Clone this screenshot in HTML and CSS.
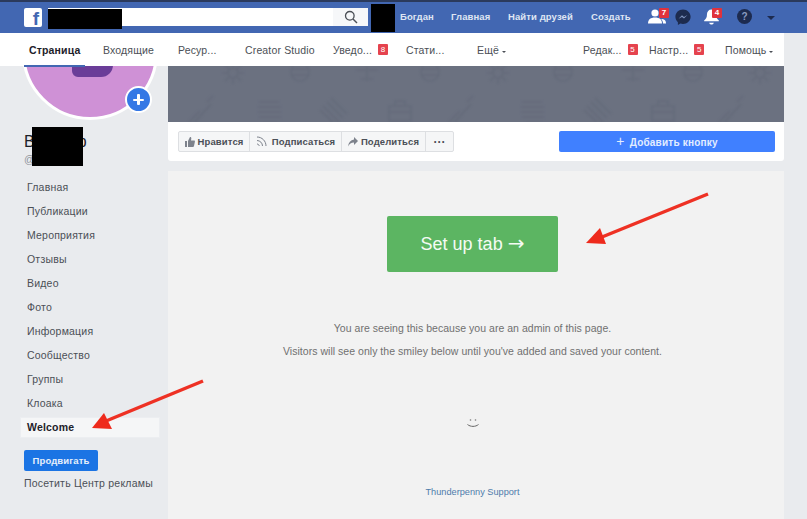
FILE: index.html
```html
<!DOCTYPE html>
<html lang="ru">
<head>
<meta charset="utf-8">
<title>Welcome</title>
<link rel="stylesheet" href="styles.css">
</head>
<body>
<div class="page">
  <header class="topbar">
    <div class="topbar-inner">
      <div class="fb-logo">f</div>
      <div class="search">
        <div class="search-redact"></div>
        <div class="search-btn">
          <svg width="14" height="14" viewBox="0 0 14 14"><circle cx="5.8" cy="5.8" r="4.3" fill="none" stroke="#4b4f56" stroke-width="1.3"/><path d="M9 9l4 4" stroke="#4b4f56" stroke-width="1.5"/></svg>
        </div>
      </div>
      <div class="avatar-redact"></div>
      <nav class="top-links">
        <a>Богдан</a><a>Главная</a><a>Найти друзей</a><a>Создать</a>
      </nav>
      <div class="top-icons">
        <div class="ticon friends">
          <svg width="18" height="15" viewBox="0 0 18 15"><circle cx="7" cy="4" r="3.6" fill="#fff"/><path d="M0 14.500c0-4 2.500-6 7-6s7 2 7 6z" fill="#fff"/><circle cx="13.500" cy="6.500" r="2.600" fill="#fff"/><path d="M13 10c3 0 5 1 5 4.500h-3c0-2-.8-3.500-2-4.500z" fill="#fff"/></svg>
          <span class="badge">7</span>
        </div>
        <div class="ticon msg">
          <svg width="16" height="16" viewBox="0 0 16 16"><path d="M8 .5C3.700 .5 .4 3.700 .4 7.800c0 2.200 1 4.100 2.500 5.400V16l2.500-1.400c.8 .2 1.700 .4 2.600 .4 4.300 0 7.600-3.200 7.600-7.200S12.300 .5 8 .5z" fill="#1d2b4f"/><path d="M3.500 9.800L7 6.300l2 1.700 3.400-1.900L9 9.600 7 7.900z" fill="#7f93bd"/></svg>
        </div>
        <div class="ticon bell">
          <svg width="17" height="17" viewBox="0 0 18 18"><path d="M9 1.500c-3 0-4.800 2.200-4.800 5.200 0 3.500-1 4.800-3 6.500v.8h15.600v-.8c-2-1.700-3-3-3-6.500 0-3-1.800-5.200-4.800-5.200z" fill="#fff"/><path d="M6.500 15.500h5c-.3 1.200-1.300 2-2.500 2s-2.200-.8-2.500-2z" fill="#fff"/></svg>
          <span class="badge">4</span>
        </div>
        <div class="ticon help">?</div>
        <div class="caret-down"></div>
      </div>
    </div>
  </header>

  <nav class="subnav">
    <div class="tab tab-active">Страница</div>
    <div class="tab tab-inbox">Входящие</div>
    <div class="tab tab-res">Ресур...</div>
    <div class="tab tab-cs">Creator Studio</div>
    <div class="tab tab-notif">Уведо...<span class="sq">8</span></div>
    <div class="tab tab-stat">Стати...</div>
    <div class="tab tab-more">Ещё<i class="mini"></i></div>
    <div class="sub-right">
      <div class="tab">Редак...<span class="sq sq-r">5</span></div>
      <div class="tab">Настр...<span class="sq sq-r">5</span></div>
      <div class="tab">Помощь<i class="mini"></i></div>
    </div>
  </nav>

  <div class="body">
    <aside class="side">
      <div class="profile">
        <div class="pic"><div class="pic-letter"></div></div>
        <div class="plus"><span></span></div>
      </div>
      <div class="name-block">
        <div class="pname">В<span class="pname-gap"></span>р</div>
        <div class="handle">@</div>
        <div class="name-redact"></div>
      </div>
      <ul class="menu">
        <li>Главная</li>
        <li>Публикации</li>
        <li>Мероприятия</li>
        <li>Отзывы</li>
        <li>Видео</li>
        <li>Фото</li>
        <li>Информация</li>
        <li>Сообщество</li>
        <li>Группы</li>
        <li>Клоака</li>
        <li class="menu-active">Welcome</li>
      </ul>
      <button class="promote">Продвигать</button>
      <div class="adcenter">Посетить Центр рекламы</div>
    </aside>

    <main class="main">
      <div class="cover">
        <svg class="cover-pattern" width="616" height="56" viewBox="0 0 616 56">
          <defs>
            <g id="m-sun"><circle r="5"/><path d="M-11 0h6M5 0h6M0-11v6M0 5v6M-8-8l4 4M4 4l4 4M8-8l-4 4M-4 4l-4 4"/></g>
            <g id="m-ball"><circle r="9"/><path d="M-9-3h18M-9 3h18"/></g>
            <g id="m-tree"><path d="M-11-3h22M0-8v16M-6 6h12"/></g>
            <g id="m-guitar"><path d="M-14 12l11-11M-10 14L8-6M4-8l6-6"/></g>
            <g id="m-lines"><path d="M-11-8h20M-12-3h23M-12 2h23M-11 7h22M-8 12h16"/></g>
            <g id="m-hatch"><path d="M-10-4L6 12M-6-8L10 8M-2-12L14 4M-13 0L2 14"/></g>
            <g id="m-bag"><path d="M-11-4h22v15h-22zM-5-4v-5h10v5M-11 2h22"/></g>
          </defs>
          <g class="motifs">
            <use href="#m-sun" x="65" y="7"/><use href="#m-ball" x="132" y="6"/><use href="#m-tree" x="199" y="7"/><use href="#m-ball" x="262" y="6"/>
            <use href="#m-sun" x="330" y="7"/><use href="#m-ball" x="395" y="6"/><use href="#m-tree" x="465" y="7"/><use href="#m-ball" x="525" y="6"/><use href="#m-sun" x="592" y="7"/>
            <use href="#m-guitar" x="35" y="44"/><use href="#m-lines" x="102" y="44"/><use href="#m-hatch" x="165" y="44"/><use href="#m-bag" x="232" y="44"/>
            <use href="#m-guitar" x="295" y="44"/><use href="#m-lines" x="365" y="44"/><use href="#m-hatch" x="429" y="44"/><use href="#m-bag" x="495" y="44"/><use href="#m-guitar" x="565" y="44"/>
          </g>
        </svg>
      </div>
      <div class="actions">
        <div class="btn-group">
          <div class="abtn b-like">
            <svg width="10" height="10" viewBox="0 0 10 10"><path d="M0 4h2v6H0zM3 4l2-4c1 0 1.500 .6 1.300 1.500L6 3.500h3c.8 0 1 .6 .9 1.200L9 9c-.1 .6-.5 1-1.100 1H3z" fill="#7d828c"/></svg>
            Нравится
          </div>
          <div class="abtn b-sub">
            <svg width="11" height="11" viewBox="0 0 11 11"><path d="M1 1c5 0 9 4 9 9M1 4.500c3 0 5.500 2.500 5.500 5.500M1 8c1.200 0 2.200 1 2.200 2" fill="none" stroke="#7d828c" stroke-width="1"/></svg>
            Подписаться
          </div>
          <div class="abtn b-share">
            <svg width="10" height="10" viewBox="0 0 10 10"><path d="M6 0l4 4-4 4V5.500C3 5.500 1.500 7 0 9.500 .5 5.500 2.500 3 6 2.500z" fill="#7d828c"/></svg>
            Поделиться
          </div>
          <div class="abtn b-more">···</div>
        </div>
        <div class="add-btn"><span class="add-plus">+</span> Добавить кнопку</div>
      </div>
      <section class="panel">
        <a class="setup">Set up tab <span class="setup-arrow">→</span></a>
        <p class="note note-1">You are seeing this because you are an admin of this page.</p>
        <p class="note note-2">Visitors will see only the smiley below until you've added and saved your content.</p>
        <div class="smiley">
          <svg width="14" height="10" viewBox="0 0 14 10"><circle cx="4.500" cy="2" r=".8" fill="#777"/><circle cx="9.500" cy="2" r=".8" fill="#777"/><path d="M1.500 6.500c3 2.500 8 2.500 11 0" fill="none" stroke="#666" stroke-width="1"/></svg>
        </div>
        <a class="support">Thunderpenny Support</a>
      </section>
    </main>
  </div>

  <svg class="arrows" width="807" height="519" viewBox="0 0 807 519">
    <path d="M708 194L602 237" stroke="#ee3124" stroke-width="3.500" fill="none"/>
    <path d="M586 243L600 228 606 244z" fill="#ee2a1c"/>
    <path d="M203 381L106 421" stroke="#ee3124" stroke-width="3.500" fill="none"/>
    <path d="M92 428L104 413 112 429z" fill="#ee2a1c"/>
  </svg>
</div>
</body>
</html>
```
FILE: styles.css
```css
* { box-sizing: border-box; }
html, body { margin: 0; padding: 0; }
body {
  width: 807px;
  height: 519px;
  overflow: hidden;
  background: #e9ebee;
  font-family: "Liberation Sans", Arial, sans-serif;
  color: #1d2129;
}
.page { position: relative; width: 807px; height: 519px; overflow: hidden; }

/* top bar */
.topbar {
  position: relative; z-index: 3;
  height: 33px;
  background: #4267b2;
  border-top: 2px solid #2b3a5c;
}
.topbar-inner { display: flex; align-items: flex-start; height: 31px; padding-left: 24px; }
.fb-logo {
  width: 18px; height: 19px; margin-top: 6px;
  background: #fff; color: #4267b2; border-radius: 2px;
  font: bold 19px/21px "Liberation Sans", sans-serif;
  text-align: right; padding-right: 3px;
}
.search {
  width: 320px; height: 18px; margin: 6px 0 0 6px;
  background: #fff; display: flex; justify-content: space-between; position: relative;
}
.search-redact { width: 74px; height: 20px; margin: 1px 0 0 0; background: #000; position: relative; z-index: 1; }
.search-btn { width: 35px; height: 18px; background: #f6f7f9; display: flex; align-items: center; justify-content: center; }
.avatar-redact { width: 24px; height: 28px; margin: 2px 0 0 3px; background: #000; }
.top-links {
  display: flex; margin-left: 5px; height: 31px; align-items: center;
  font-size: 9.500px; font-weight: bold; color: #dfe5f2; letter-spacing: .1px;
  padding-bottom: 2px;
}
.top-links a:nth-child(1) { width: 51px; }
.top-links a:nth-child(2) { width: 57px; }
.top-links a:nth-child(3) { width: 83px; }
.top-links a:nth-child(4) { width: 57px; }
.top-icons { display: flex; align-items: center; height: 31px; padding-bottom: 2px; }
.ticon { position: relative; display: flex; align-items: center; justify-content: center; }
.friends { width: 18px; align-self: stretch; }
.msg { width: 16px; margin-left: 9px; }
.bell { width: 17px; margin-left: 12px; align-self: stretch; }
.help {
  width: 15px; height: 15px; margin-left: 17px; border-radius: 50%;
  background: #1d2b4f; color: #8a9cc2; font-size: 10px; font-weight: bold;
}
.caret-down {
  width: 0; height: 0; margin: 2px 0 0 15px;
  border-left: 4px solid transparent; border-right: 4px solid transparent; border-top: 4px solid #1d2b4f;
}
.badge {
  position: absolute; top: 6px; left: 11px;
  width: 10px; height: 10px; border-radius: 1px;
  background: #e0323c; color: #fff;
  font-size: 8px; line-height: 10px; font-weight: bold; text-align: center;
}
.bell .badge { left: 9px; }

/* subnav */
.subnav {
  width: 784px; height: 33px; background: #fff;
  display: flex; align-items: center; position: relative; z-index: 2;
  font-size: 10.500px; color: #4b4f56; letter-spacing: .15px;
}
.tab { position: relative; white-space: nowrap; }
.tab-active {
  margin-left: 29px; width: 74px; font-weight: bold; color: #1d2129; font-size: 10.500px;
}
.tab-active::after {
  content: ""; position: absolute; left: -5px; width: 61px; bottom: -11px; height: 2px; background: #4267b2;
}
.tab-inbox { width: 75px; }
.tab-res { width: 67px; }
.tab-cs { width: 88px; }
.tab-notif { width: 73px; }
.tab-stat { width: 71px; }
.tab-more { width: 60px; }
.sub-right { display: flex; margin-left: 46px; }
.sub-right .tab:nth-child(1) { width: 66px; }
.sub-right .tab:nth-child(2) { width: 76px; }
.sq {
  position: absolute; top: 0; width: 10px; height: 11px; border-radius: 1px;
  background: #e5434e; color: #fff; font-size: 8px; line-height: 11px; text-align: center;
  margin-left: 6px;
}
.mini {
  display: inline-block; margin: 0 0 1px 3px;
  border-left: 2px solid transparent; border-right: 2px solid transparent; border-top: 2.500px solid #4b4f56;
}

/* body */
.body { display: flex; height: 453px; }
.side { width: 168px; position: relative; }
.profile { position: relative; height: 53px; }
.pic {
  position: absolute; left: 22px; top: -82px; width: 136px; height: 136px;
  border-radius: 50%; background: #cf91d6; border: 3px solid #fff; overflow: hidden;
}
.pic-letter {
  position: absolute; left: 47px; top: 77px; width: 41px; height: 13px;
  background: #6a3d98; border-radius: 0 0 12px 6px;
}
.plus {
  position: absolute; left: 125px; top: 20px; width: 27px; height: 27px;
  border-radius: 50%; background: #3578e5; border: 2px solid #fff;
}
.plus span, .plus span::after {
  position: absolute; background: #fff; border-radius: 1px;
}
.plus span { left: 6px; top: 10.500px; width: 11px; height: 2.500px; }
.plus span::after { content: ""; left: 4.250px; top: -4.250px; width: 2.500px; height: 11px; }
.name-block { position: relative; height: 57px; padding: 14px 0 0 24px; }
.pname { font-size: 16px; line-height: 18px; color: #1d2129; display: flex; }
.pname-gap { width: 43px; }
.handle { font-size: 10.500px; color: #90949c; line-height: 14px; margin-top: 1px; }
.name-redact { position: absolute; left: 32px; top: 8px; width: 51px; height: 39px; background: #000; }
.menu { list-style: none; margin: 0; padding: 0 0 0 20px; font-size: 10.500px; letter-spacing: .2px; color: #4b4f56; }
.menu li { height: 24px; line-height: 23px; padding-left: 7px; width: 140px; }
.menu .menu-active {
  height: 21px; line-height: 19px; font-weight: bold; color: #1d2129;
  background: #f5f6f7; border: 1px solid #eceef1; padding-left: 6px; margin-top: 1px;
}
.promote {
  display: block; margin: 12px 0 0 24px; width: 74px; height: 21px; padding: 0;
  background: #1b74e4; border: 0; border-radius: 2px; color: #e6effb;
  font: bold 9.500px "Liberation Sans", sans-serif; letter-spacing: .1px;
}
.adcenter { margin: 5px 0 0 24px; font-size: 10.500px; letter-spacing: .22px; color: #4b4f56; line-height: 14px; }

/* main */
.main { width: 616px; }
.cover { height: 56px; background: #6b7180; overflow: hidden; }
.cover-pattern { display: block; filter: blur(.9px); }
.motifs { fill: none; stroke: #636978; stroke-width: 1.200; }
.actions {
  height: 39px; background: #fff; border-radius: 0 0 3px 3px;
  display: flex; align-items: flex-start; justify-content: space-between;
  padding: 9px 9px 0 10px;
}
.btn-group { display: flex; height: 21px; border: 1px solid #dddfe2; border-radius: 2px; background: #f5f6f7; }
.abtn {
  display: flex; align-items: center; justify-content: center; gap: 3px;
  height: 19px; border-right: 1px solid #dddfe2;
  font-size: 9.500px; font-weight: bold; color: #4b4f56; letter-spacing: .12px;
}
.b-like { width: 71px; }
.b-sub { width: 92px; gap: 5px; }
.b-share { width: 84px; }
.b-more { width: 27px; border-right: 0; font-size: 12px; letter-spacing: 0; }
.add-btn {
  width: 216px; height: 21px; background: #4080ff; border-radius: 2px;
  color: #e3edff; font-size: 10px; font-weight: bold; letter-spacing: .2px;
  text-align: center; line-height: 21px;
}
.add-plus { font-size: 14px; font-weight: normal; margin-right: 2px; }
.panel {
  margin-top: 10px; height: 348px; background: #f2f2f2; padding-right: 7px;
  display: flex; flex-direction: column; align-items: center;
}
.setup {
  margin-top: 45px; width: 171px; height: 56px; background: #5cb562; border-radius: 2px;
  color: #f4fbf4; font-size: 18px; text-align: center; line-height: 56px;
}
.setup-arrow { font-family: "DejaVu Sans", sans-serif; font-size: 20px; line-height: 0; }
.note { margin: 0; font-size: 10.500px; color: #707070; line-height: 14px; letter-spacing: .03px; }
.note-1 { margin-top: 49px; }
.note-2 { margin-top: 9px; }
.smiley { margin-top: 60px; height: 10px; line-height: 0; }
.support { margin-top: 58px; font-size: 9.200px; line-height: 12px; color: #4f7cab; }

/* annotation arrows */
.arrows { position: absolute; left: 0; top: 0; pointer-events: none; z-index: 5; }
```
